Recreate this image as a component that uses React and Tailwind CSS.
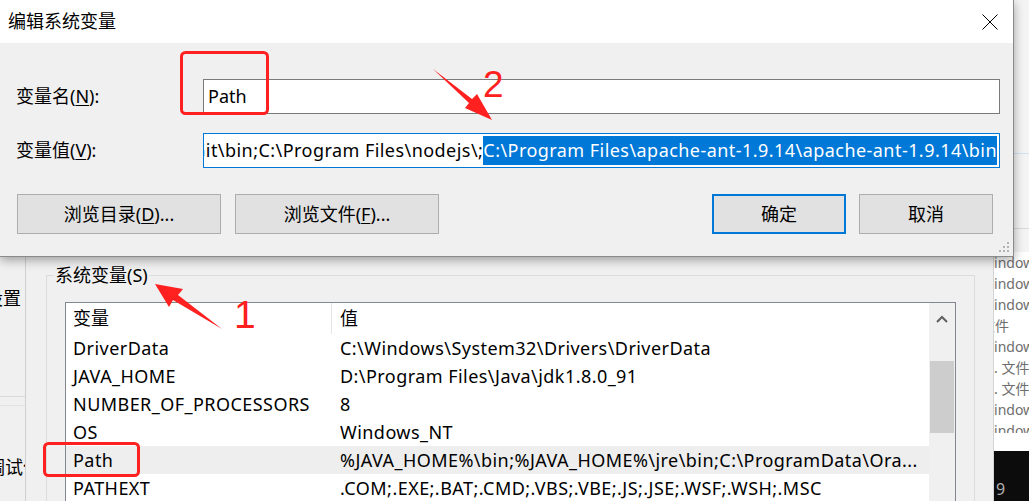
import React from 'react';

// 系统变量列表里的行
const rows = [
  { name: 'DriverData', value: 'C:\\Windows\\System32\\Drivers\\DriverData' },
  { name: 'JAVA_HOME', value: 'D:\\Program Files\\Java\\jdk1.8.0_91' },
  { name: 'NUMBER_OF_PROCESSORS', value: '8' },
  { name: 'OS', value: 'Windows_NT' },
  { name: 'Path', value: '%JAVA_HOME%\\bin;%JAVA_HOME%\\jre\\bin;C:\\ProgramData\\Ora...', active: true },
  { name: 'PATHEXT', value: '.COM;.EXE;.BAT;.CMD;.VBS;.VBE;.JS;.JSE;.WSF;.WSH;.MSC' },
];

// 右侧被遮住的窗口里露出的文字
const sideLines = [
  { t: 'Windows', c: '-ml-[13px]' },
  { t: 'Windows', c: '-ml-[13px]' },
  { t: 'Windows', c: '-ml-[13px]' },
  { t: '文件', c: '-ml-[13px]' },
  { t: 'Windows', c: '-ml-[13px]' },
  { t: '程序. 文件', c: '-ml-[28px]' },
  { t: '程序. 文件', c: '-ml-[28px]' },
  { t: 'Windows', c: '-ml-[13px]' },
  { t: 'Windows', c: '-ml-[13px]' },
];

const WinButton = ({ children, primary, className }) => (
  <button
    className={
      'h-[40px] bg-[#e1e1e1] text-[18px] text-black flex items-center justify-center ' +
      (primary ? 'border-2 border-[#0078d7] ' : 'border border-[#adadad] ') +
      className
    }
  >
    {children}
  </button>
);

const CloseIcon = () => (
  <svg width="16" height="16" viewBox="0 0 16 16">
    <path d="M0.5 0.5 L15.5 15.5 M15.5 0.5 L0.5 15.5" stroke="#000" strokeWidth="1" fill="none" />
  </svg>
);

const Grip = () => (
  <svg width="12" height="12" viewBox="0 0 12 12" className="absolute right-[3px] bottom-[3px]">
    <g fill="#b4b4b4">
      <rect x="9" y="1" width="2" height="2" />
      <rect x="5" y="5" width="2" height="2" />
      <rect x="9" y="5" width="2" height="2" />
      <rect x="1" y="9" width="2" height="2" />
      <rect x="5" y="9" width="2" height="2" />
      <rect x="9" y="9" width="2" height="2" />
    </g>
  </svg>
);

const EditDialog = () => (
  <div className="absolute left-0 top-0 w-[1014px] h-[257px] bg-[#f0f0f0] border-r border-b border-[#8a8a8a] shadow-[0_3px_10px_rgba(0,0,0,0.35)] flex flex-col">
    {/* 标题栏 */}
    <div className="h-[43px] bg-white flex items-center justify-between pl-[8px] pr-[15px]">
      <span className="text-[18px] text-black">编辑系统变量</span>
      <CloseIcon />
    </div>

    <div className="relative flex-1 pt-[36px] pl-[16px] pr-[13px]">
      <div className="flex items-center">
        <div className="w-[187px] text-[18px] text-black">
          变量名(<span className="underline underline-offset-2">N</span>):
        </div>
        <div className="flex-1 h-[35px] bg-white border border-[#7a7a7a] flex items-center pl-[4px] text-[18px] text-black">
          Path
        </div>
      </div>

      <div className="flex items-center mt-[19px]">
        <div className="w-[187px] text-[18px] text-black">
          变量值(<span className="underline underline-offset-2">V</span>):
        </div>
        <div className="flex-1 min-w-0 h-[35px] bg-white border border-[#0078d7] flex items-center justify-end overflow-hidden whitespace-nowrap pr-[2px] text-[18px] tracking-[0.45px] text-black">
          <span>C:\Program Files\Git\cmd;C:\Program Files\Git\bin;C:\Program Files\nodejs\;</span>
          <span className="bg-[#0078d7] text-white leading-[29px]">C:\Program Files\apache-ant-1.9.14\apache-ant-1.9.14\bin</span>
        </div>
      </div>

      <div className="flex items-center mt-[26px] pl-[1px] pr-[7px]">
        <WinButton className="w-[204px]">
          浏览目录(<span className="underline underline-offset-2">D</span>)...
        </WinButton>
        <WinButton className="w-[204px] ml-[14px]">
          浏览文件(<span className="underline underline-offset-2">F</span>)...
        </WinButton>
        <div className="flex-1" />
        <WinButton primary className="w-[134px] ml-[1px]">确定</WinButton>
        <WinButton className="w-[134px] ml-[13px]">取消</WinButton>
      </div>

      <Grip />
    </div>
  </div>
);

const VariableList = () => (
  <div className="mt-[15px] mx-[18px] h-[220px] bg-white border border-[#828790] flex">
    <div className="flex-1 min-w-0 flex flex-col text-[18px] text-black">
      <div className="h-[31px] flex items-center">
        <div className="w-[266px] h-full pl-[7px] flex items-center border-r border-[#e5e5e5]">变量</div>
        <div className="pl-[8px]">值</div>
      </div>
      {rows.map(r => (
        <div key={r.name} className={'h-[28px] flex items-center whitespace-nowrap tracking-[0.45px] ' + (r.active ? 'bg-[#eeeeee]' : '')}>
          <div className="w-[266px] shrink-0 pl-[7px]">{r.name}</div>
          <div className="flex-1 min-w-0 pl-[8px] overflow-hidden">{r.value}</div>
        </div>
      ))}
    </div>
    {/* 滚动条 */}
    <div className="w-[26px] bg-[#f0f0f0] flex flex-col items-center">
      <div className="h-[31px] flex items-center justify-center">
        <svg width="12" height="8" viewBox="0 0 12 8">
          <path d="M1 7 L6 2 L11 7" stroke="#606060" strokeWidth="2" fill="none" />
        </svg>
      </div>
      <div className="mt-[27px] w-[24px] h-[72px] bg-[#cdcdcd]" />
    </div>
  </div>
);

const Annotations = () => (
  <svg className="absolute left-0 top-0 pointer-events-none" width="1029" height="501" viewBox="0 0 1029 501">
    <g fill="#ff2020">
      {/* 箭头 1 */}
      <polygon points="155,284 183,289 178,295 222,329 173,300 169,307" />
      {/* 箭头 2 */}
      <polygon points="492,120 477,94 472,99 433,69 469,103 465,108" />
    </g>
    <text x="234" y="328" fill="#ff2020" fontSize="39" fontFamily="'Liberation Sans', sans-serif">1</text>
    <text x="483" y="97" fill="#ff2020" fontSize="37" fontFamily="'Liberation Sans', sans-serif">2</text>
    <rect x="181.5" y="52.5" width="86" height="61" rx="4" fill="none" stroke="#ff2020" strokeWidth="3" />
    <rect x="44.5" y="443.5" width="94" height="32" rx="4" fill="none" stroke="#ff2020" strokeWidth="3" />
  </svg>
);

export default function App() {
  return (
    <div className="relative w-[1029px] h-[501px] overflow-hidden bg-[#f0f0f0] font-['Noto_Sans','Noto_Sans_CJK_SC',sans-serif]">
      {/* 后面的窗口 */}
      <div className="flex h-full">
        <div className="w-[26px] h-full border-r border-[#cfcfcf] overflow-hidden text-[18px] text-black whitespace-nowrap flex flex-col">
          <div className="mt-[286px] -ml-[15px] leading-[24px]">设置</div>
          <div className="mt-[86px] h-px bg-[#dadada]" />
          <div className="mt-[8px] h-px bg-[#e3e3e3]" />
          <div className="mt-[49px] -ml-[13px] leading-[24px]">调试信</div>
        </div>

        <div className="w-[968px] h-full border-r border-[#d4d4d4] pt-[263px] pl-[20px] pr-[18px]">
          <fieldset className="border border-[#dcdcdc] h-[260px]">
            <legend className="ml-[7px] px-[1px] text-[18px] leading-[24px] text-black">系统变量(S)</legend>
            <VariableList />
          </fieldset>
        </div>

        <div className="flex-1 h-full flex flex-col overflow-hidden">
          <div className="h-[252px] bg-[#f4f4f4] flex flex-col">
            <div className="mt-[153px] h-px bg-[#cfe3f5]" />
            <div className="mt-[74px] h-px bg-[#d9d9d9]" />
          </div>
          <div className="h-[181px] bg-white overflow-hidden text-[14px] leading-[21px] text-[#6e6e6e] whitespace-nowrap">
            {sideLines.map((l, i) => (
              <div key={i} className={l.c}>{l.t}</div>
            ))}
          </div>
          <div className="h-[18px] bg-white" />
          <div className="flex-1 bg-[#0c0c0c] text-[16px] text-[#b0b0b0] pl-[2px] pt-[28px] leading-[20px]">9</div>
        </div>
      </div>

      <EditDialog />
      <Annotations />
    </div>
  );
}
